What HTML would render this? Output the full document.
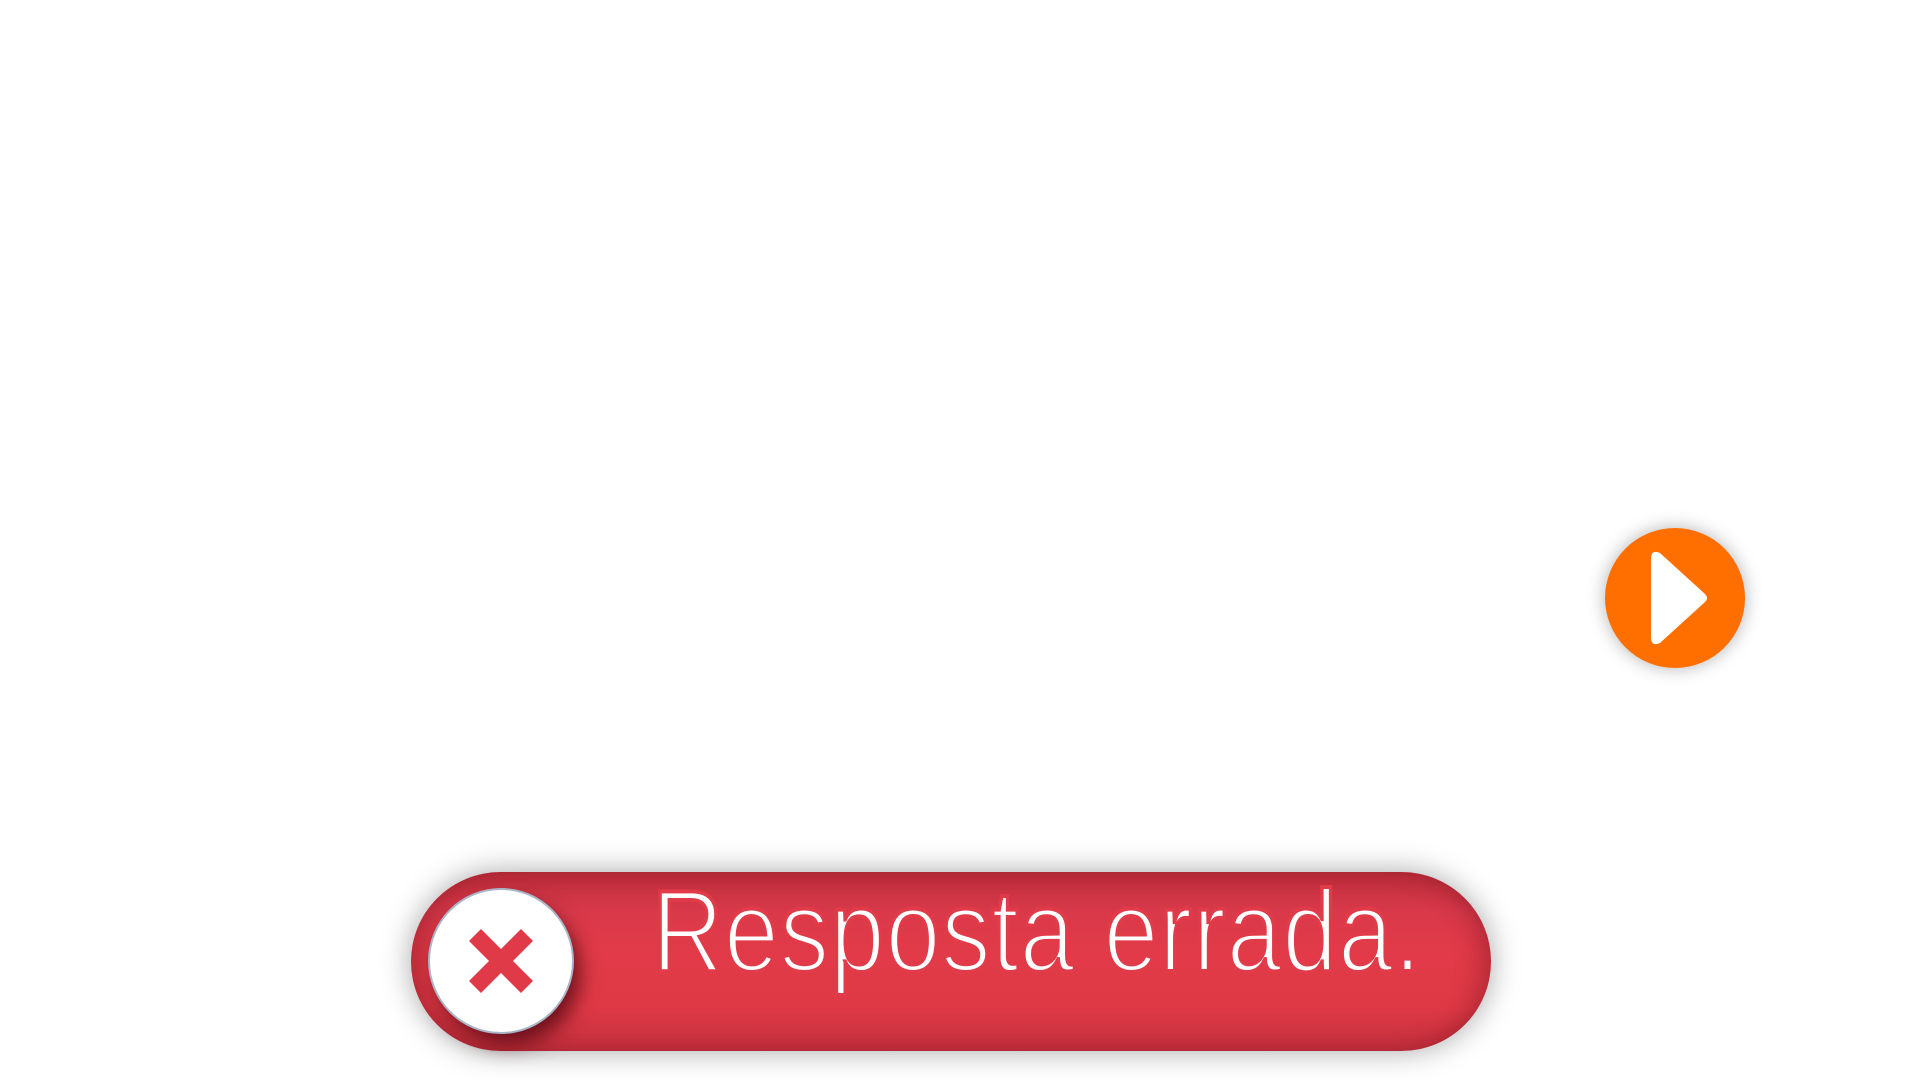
<!DOCTYPE html>
<html><head><style>
html,body{margin:0;padding:0;width:1920px;height:1080px;background:#fff;overflow:hidden;position:relative;font-family:"Liberation Sans",sans-serif}
.pill{position:absolute;left:411px;top:872px;width:1080px;height:179px;border-radius:90px;
background:linear-gradient(to bottom,#bc2d3a 0%,#d9394a 22%,#e23a48 45%,#e03946 75%,#c3303d 100%);
box-shadow:0 0 30px rgba(0,0,0,0.35)}
.pill:after{content:"";position:absolute;inset:0;border-radius:90px;box-shadow:inset 18px 0 25px -10px rgba(120,20,30,.45),inset -18px 0 25px -10px rgba(120,20,30,.45)}
.circ{position:absolute;left:430px;top:890px;width:142px;height:142px;border-radius:50%;background:#fff;
box-shadow:0 0 0 2px #a9b6c8,8px 12px 20px rgba(60,0,10,.7)}
.txt{position:absolute;left:652px;top:866px;color:#fff;font-size:116px;font-weight:normal;line-height:130px;white-space:nowrap;transform-origin:0 0;transform:scaleX(0.85);letter-spacing:1px;-webkit-text-stroke:4px #e13a48}
.play{position:absolute;left:1605px;top:528px;width:140px;height:140px;border-radius:50%;background:#ff6f00;box-shadow:0 0 18px rgba(0,0,0,.3)}
</style></head><body>
<div class="pill"></div>
<div class="circ"></div>
<svg style="position:absolute;left:469px;top:929px" width="64" height="64" viewBox="0 0 64 64">
<path d="M12 0 L32 20 L52 0 L64 12 L44 32 L64 52 L52 64 L32 44 L12 64 L0 52 L20 32 L0 12 Z" fill="#e03a48"/>
</svg>
<div class="txt">Resposta errada.</div>
<div class="play"></div>
<svg style="position:absolute;left:1605px;top:528px" width="140" height="140" viewBox="0 0 140 140">
<path d="M46 36 Q46 26 55 30 L100 71 Q104 75 100 79 L55 120 Q46 124 46 114 Z" fill="#fff" transform="translate(0,-5)"/>
</svg>
</body></html>
